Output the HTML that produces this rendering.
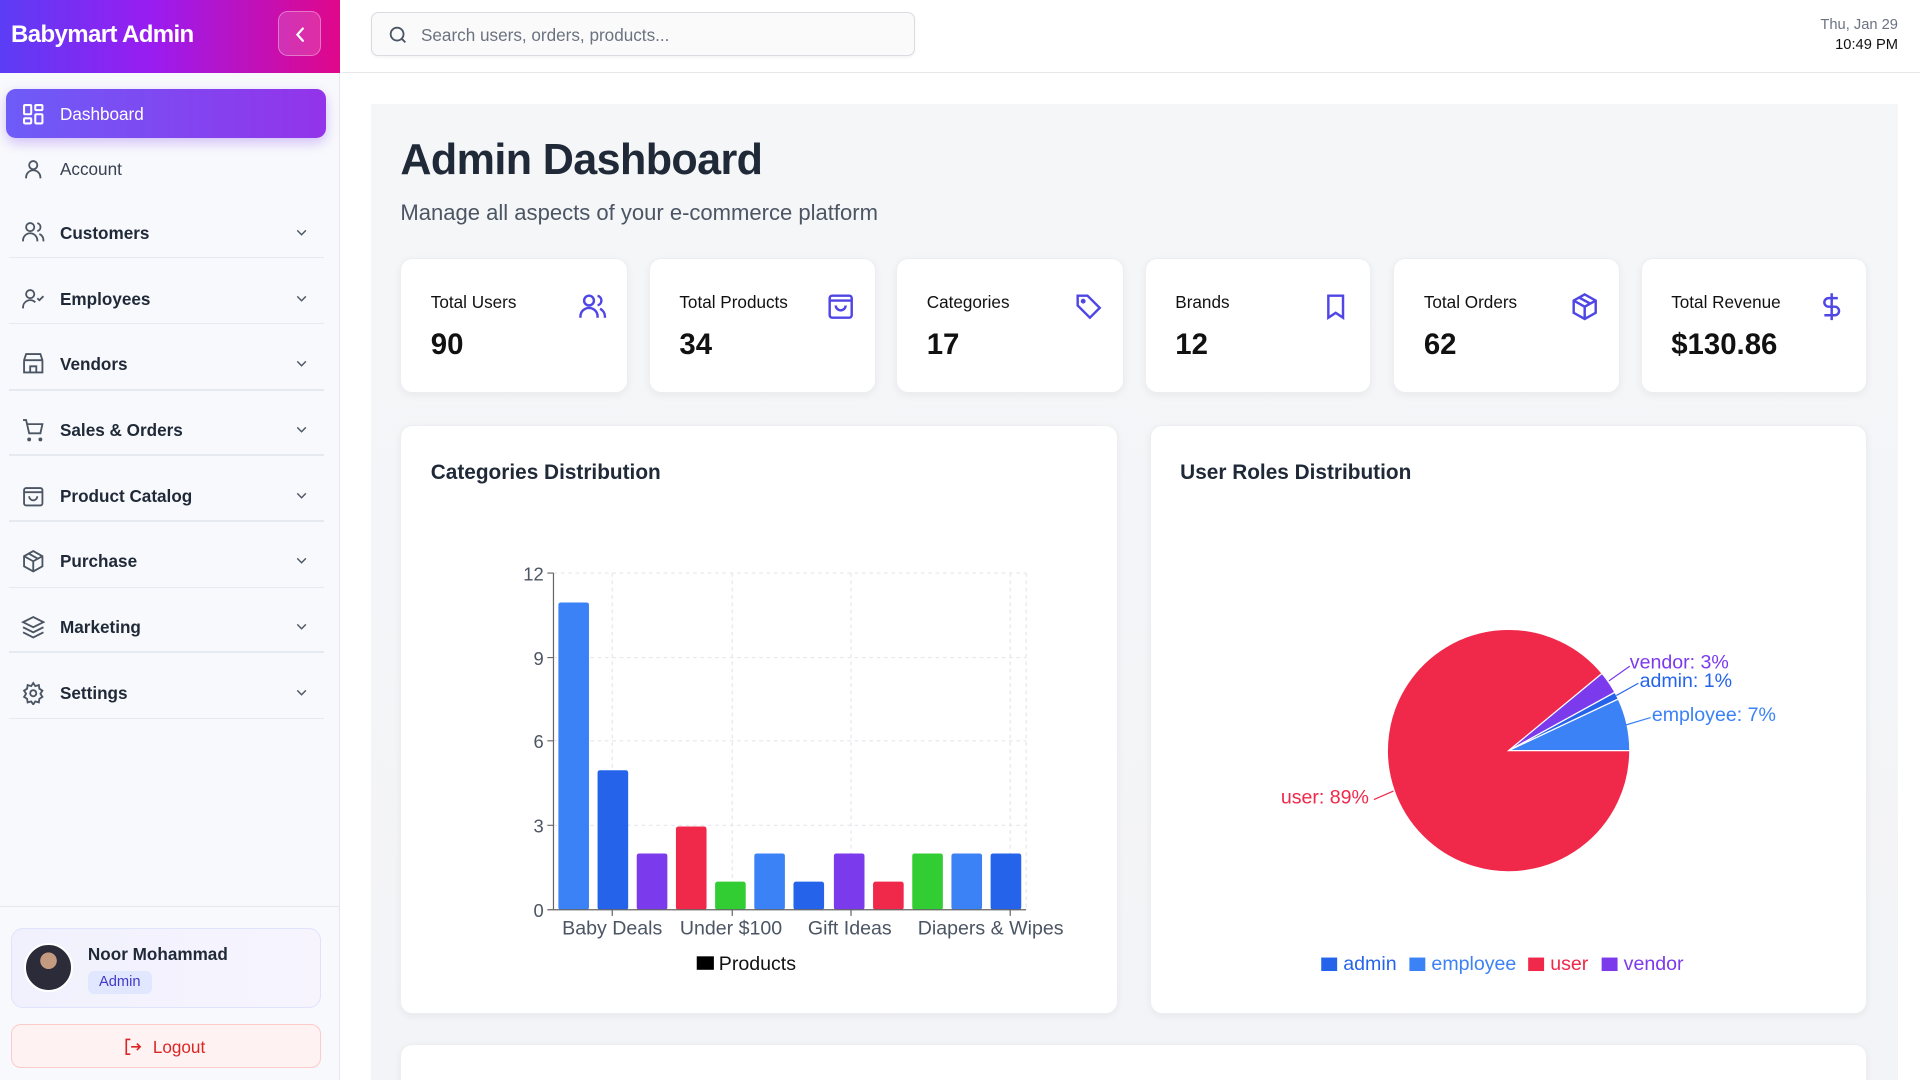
<!DOCTYPE html>
<html><head><meta charset="utf-8"><style>
*{box-sizing:border-box;margin:0;padding:0}
html,body{width:1920px;height:1080px;overflow:hidden;background:#fff}
#root{zoom:1.2245;width:1568px;height:882px;position:relative;font-family:"Liberation Sans",sans-serif;color:#1f2937}
.abs{position:absolute}
.side{left:0;top:0;width:278px;height:882px;background:#f8f9fc;border-right:1px solid #e5e7eb}
.logo{left:0;top:0;width:278px;height:60px;background:linear-gradient(90deg,#5b3df5 0%,#9a1cf0 45%,#e0078a 100%)}
.logo span{position:absolute;left:9px;top:17px;color:#fff;font-weight:bold;font-size:19.6px;letter-spacing:-0.5px}
.cbtn{left:227px;top:9px;width:35px;height:37px;border:1px solid rgba(255,255,255,.35);border-radius:8px;background:rgba(255,255,255,.15)}
.nav{left:5px;width:261px;height:40px;font-size:14px;color:#1f2937;font-weight:bold}
.nav .t{position:absolute;left:44px;top:12px}
.nav svg.i{position:absolute;left:12px;top:10px}
.nav .ch{position:absolute;left:234px;top:13px}
.sep{left:7px;width:258px;height:1px;background:#e5e9f0}
.card{background:#fff;border:1px solid #eceef2;border-radius:10px;box-shadow:0 2px 6px rgba(0,0,0,.05)}
.stat .l{position:absolute;left:24px;top:27px;font-size:14px;color:#111}
.stat .v{position:absolute;left:24px;top:56px;font-size:24px;font-weight:bold;color:#111}
.stat svg{position:absolute;right:16px;top:27px}
</style></head><body><div id="root">
<div class="abs side"></div>
<div class="abs logo"><span>Babymart Admin</span></div>
<div class="abs cbtn"><svg width="35" height="37" viewBox="0 0 35 37"><path d="M19.5 13.5l-4.5 5 4.5 5" stroke="#fff" stroke-width="1.8" fill="none" stroke-linecap="round"/></svg></div>
<div class="abs" style="left:279px;top:0;width:1289px;height:60px;background:#fff;border-bottom:1px solid #e5e7eb"></div>
<div class="abs" style="left:303px;top:10px;width:444px;height:36px;border:1px solid #d9dce1;border-radius:6px;background:#fafafa;box-shadow:0 1px 2px rgba(0,0,0,.05)">
<svg class="abs" style="left:12px;top:9px" width="18" height="18" viewBox="0 0 24 24" fill="none" stroke="#4b5563" stroke-width="2"><circle cx="11" cy="11" r="7"/><path d="M20 20l-4-4"/></svg>
<span class="abs" style="left:40px;top:10px;font-size:14px;color:#6b7280">Search users, orders, products...</span></div>
<div class="abs" style="right:18px;top:13px;text-align:right;font-size:12px;color:#6b7280;line-height:16px">Thu, Jan 29<br><span style="color:#111">10:49 PM</span></div>
<div class="abs" style="left:303px;top:85px;width:1247px;height:797px;background:linear-gradient(180deg,#f5f6f8,#f3f4f7)"></div>
<div class="abs nav" style="top:73px;background:linear-gradient(90deg,#6d5cf8,#9333ea);border-radius:8px;color:#fff;font-weight:normal;box-shadow:0 4px 10px rgba(124,58,237,.3)">
<svg class="i" width="20" height="20" viewBox="0 0 24 24" fill="none" stroke="#fff" stroke-width="2"><rect x="3" y="3" width="7" height="9" rx="1"/><rect x="14" y="3" width="7" height="5" rx="1"/><rect x="14" y="12" width="7" height="9" rx="1"/><rect x="3" y="16" width="7" height="5" rx="1"/></svg><span class="t">Dashboard</span></div>
<div class="abs nav" style="top:118px;font-weight:normal"><svg class="i" width="20" height="20" viewBox="0 0 24 24" fill="none" stroke="#4b5563" stroke-width="1.8"><circle cx="12" cy="8" r="4"/><path d="M5 21v-1a7 7 0 0114 0v1"/></svg><span class="t" style="color:#374151">Account</span></div>
<div class="abs nav" style="top:170px"><svg class="i" width="20" height="20" viewBox="0 0 24 24" fill="none" stroke="#4b5563" stroke-width="1.8"><circle cx="9" cy="7" r="4"/><path d="M2 21v-1a7 7 0 0114 0v1M16 3.1a4 4 0 010 7.8M22 21v-1a7 7 0 00-4-6.3"/></svg><span class="t">Customers</span><svg class="ch" width="14" height="14" viewBox="0 0 24 24" fill="none" stroke="#4b5563" stroke-width="2"><path d="M6 9l6 6 6-6"/></svg></div>
<div class="abs sep" style="top:210px"></div>
<div class="abs nav" style="top:224px"><svg class="i" width="20" height="20" viewBox="0 0 24 24" fill="none" stroke="#4b5563" stroke-width="1.8"><circle cx="9" cy="7" r="4"/><path d="M2 21v-1a7 7 0 0112-5M16 11l2 2 4-4"/></svg><span class="t">Employees</span><svg class="ch" width="14" height="14" viewBox="0 0 24 24" fill="none" stroke="#4b5563" stroke-width="2"><path d="M6 9l6 6 6-6"/></svg></div>
<div class="abs sep" style="top:264px"></div>
<div class="abs nav" style="top:277px"><svg class="i" width="20" height="20" viewBox="0 0 24 24" fill="none" stroke="#4b5563" stroke-width="1.8"><path d="M3 9l2-6h14l2 6M3 9v12h18V9M3 9h18M9 21v-6h6v6"/></svg><span class="t">Vendors</span><svg class="ch" width="14" height="14" viewBox="0 0 24 24" fill="none" stroke="#4b5563" stroke-width="2"><path d="M6 9l6 6 6-6"/></svg></div>
<div class="abs sep" style="top:318px"></div>
<div class="abs nav" style="top:331px"><svg class="i" width="20" height="20" viewBox="0 0 24 24" fill="none" stroke="#4b5563" stroke-width="1.8"><circle cx="8" cy="21" r="1"/><circle cx="19" cy="21" r="1"/><path d="M2 2h3l3 13h11l2-9H6"/></svg><span class="t">Sales &amp; Orders</span><svg class="ch" width="14" height="14" viewBox="0 0 24 24" fill="none" stroke="#4b5563" stroke-width="2"><path d="M6 9l6 6 6-6"/></svg></div>
<div class="abs sep" style="top:371px"></div>
<div class="abs nav" style="top:385px"><svg class="i" width="20" height="20" viewBox="0 0 24 24" fill="none" stroke="#4b5563" stroke-width="1.8"><rect x="3" y="4" width="18" height="17" rx="2"/><path d="M3 8h18M8 12a4 4 0 008 0"/></svg><span class="t">Product Catalog</span><svg class="ch" width="14" height="14" viewBox="0 0 24 24" fill="none" stroke="#4b5563" stroke-width="2"><path d="M6 9l6 6 6-6"/></svg></div>
<div class="abs sep" style="top:425px"></div>
<div class="abs nav" style="top:438px"><svg class="i" width="20" height="20" viewBox="0 0 24 24" fill="none" stroke="#4b5563" stroke-width="1.8"><path d="M12 2l9 5v10l-9 5-9-5V7zM3 7l9 5 9-5M12 12v10M7.5 4.5l9 5"/></svg><span class="t">Purchase</span><svg class="ch" width="14" height="14" viewBox="0 0 24 24" fill="none" stroke="#4b5563" stroke-width="2"><path d="M6 9l6 6 6-6"/></svg></div>
<div class="abs sep" style="top:479px"></div>
<div class="abs nav" style="top:492px"><svg class="i" width="20" height="20" viewBox="0 0 24 24" fill="none" stroke="#4b5563" stroke-width="1.8"><path d="M12 2L2 7l10 5 10-5zM2 12l10 5 10-5M2 17l10 5 10-5"/></svg><span class="t">Marketing</span><svg class="ch" width="14" height="14" viewBox="0 0 24 24" fill="none" stroke="#4b5563" stroke-width="2"><path d="M6 9l6 6 6-6"/></svg></div>
<div class="abs sep" style="top:532px"></div>
<div class="abs nav" style="top:546px"><svg class="i" width="20" height="20" viewBox="0 0 24 24" fill="none" stroke="#4b5563" stroke-width="1.8"><circle cx="12" cy="12" r="3"/><path d="M12 2l2 3 3.5-1 .5 3.5 3 2-2 3 2 3-3 2-.5 3.5-3.5-1-2 3-2-3-3.5 1-.5-3.5-3-2 2-3-2-3 3-2L6.5 4 10 5z"/></svg><span class="t">Settings</span><svg class="ch" width="14" height="14" viewBox="0 0 24 24" fill="none" stroke="#4b5563" stroke-width="2"><path d="M6 9l6 6 6-6"/></svg></div>
<div class="abs sep" style="top:586px"></div>
<div class="abs" style="left:0;top:740px;width:278px;height:1px;background:#e5e7eb"></div>
<div class="abs" style="left:9px;top:758px;width:253px;height:65px;border:1px solid #dfe3fb;border-radius:10px;background:linear-gradient(90deg,#f0f1fd,#f7f4fe)">
<div class="abs" style="left:10px;top:11px;width:40px;height:40px;border-radius:50%;background:radial-gradient(circle at 50% 35%,#c49a80 0 22%,#2b2b3a 23% 100%);border:2px solid #fff"></div>
<span class="abs" style="left:62px;top:12px;font-size:14px;font-weight:bold;color:#1f2937">Noor Mohammad</span>
<span class="abs" style="left:62px;top:34px;font-size:12px;color:#4338ca;background:#e0e7ff;border-radius:5px;padding:3px 9px">Admin</span></div>
<div class="abs" style="left:9px;top:836px;width:253px;height:36px;border:1px solid #fecaca;border-radius:8px;background:#fef2f2;color:#dc2626;font-size:14px">
<svg class="abs" style="left:91px;top:10px" width="16" height="16" viewBox="0 0 24 24" fill="none" stroke="#dc2626" stroke-width="2"><path d="M9 3H4v18h5M10 12h11M17 8l4 4-4 4"/></svg><span class="abs" style="left:115px;top:10px">Logout</span></div>
<div class="abs" style="left:327px;top:111px;font-size:35.2px;font-weight:bold;color:#1f2937;letter-spacing:-0.5px">Admin Dashboard</div>
<div class="abs" style="left:327px;top:163px;font-size:18px;color:#4b5563">Manage all aspects of your e-commerce platform</div>
<div class="abs card stat" style="left:327px;top:211px;width:186px;height:110px"><span class="l">Total Users</span><span class="v">90</span><svg width="24" height="24" viewBox="0 0 24 24" fill="none" stroke="#4f46e5" stroke-width="2"><circle cx="9" cy="7" r="4"/><path d="M2 21v-1a7 7 0 0114 0v1M16 3.1a4 4 0 010 7.8M22 21v-1a7 7 0 00-4-6.3"/></svg></div>
<div class="abs card stat" style="left:530px;top:211px;width:185px;height:110px"><span class="l">Total Products</span><span class="v">34</span><svg width="24" height="24" viewBox="0 0 24 24" fill="none" stroke="#4f46e5" stroke-width="2"><rect x="3" y="3" width="18" height="18" rx="2"/><path d="M3 7h18M8 11a4 4 0 008 0"/></svg></div>
<div class="abs card stat" style="left:732px;top:211px;width:186px;height:110px"><span class="l">Categories</span><span class="v">17</span><svg width="24" height="24" viewBox="0 0 24 24" fill="none" stroke="#4f46e5" stroke-width="2"><path d="M3 3h8l10 10-8 8L3 11z"/><circle cx="7.5" cy="7.5" r="1"/></svg></div>
<div class="abs card stat" style="left:935px;top:211px;width:185px;height:110px"><span class="l">Brands</span><span class="v">12</span><svg width="24" height="24" viewBox="0 0 24 24" fill="none" stroke="#4f46e5" stroke-width="2"><path d="M6 3h12v18l-6-4-6 4z"/></svg></div>
<div class="abs card stat" style="left:1138px;top:211px;width:185px;height:110px"><span class="l">Total Orders</span><span class="v">62</span><svg width="24" height="24" viewBox="0 0 24 24" fill="none" stroke="#4f46e5" stroke-width="2"><path d="M12 2l9 5v10l-9 5-9-5V7zM3 7l9 5 9-5M12 12v10M7.5 4.5l9 5"/></svg></div>
<div class="abs card stat" style="left:1340px;top:211px;width:185px;height:110px"><span class="l">Total Revenue</span><span class="v">$130.86</span><svg width="24" height="24" viewBox="0 0 24 24" fill="none" stroke="#4f46e5" stroke-width="2"><path d="M12 1v22M17 5H9.5a3.5 3.5 0 000 7h5a3.5 3.5 0 010 7H6"/></svg></div>
<div class="abs card" style="left:327px;top:347px;width:586px;height:481px"><span class="abs" style="left:24px;top:29px;font-size:17px;font-weight:bold;color:#1f2937">Categories Distribution</span></div>
<div class="abs card" style="left:939px;top:347px;width:586px;height:481px"><span class="abs" style="left:24px;top:29px;font-size:17px;font-weight:bold;color:#1f2937">User Roles Distribution</span></div>
<div class="abs card" style="left:327px;top:853px;width:1198px;height:60px"></div>
<svg class="abs" style="left:0;top:0" width="1568" height="882" viewBox="0 0 1568 882" font-family="Liberation Sans, sans-serif">
<g stroke="#e5e7eb" stroke-dasharray="3 3" fill="none">
<path d="M452 468H838M452 537H838M452 605H838M452 674H838M500 468V743M598 468V743M695 468V743M825 468V743M838 468V743"/></g>
<g>
<rect x="456" y="492" width="25" height="251" rx="2" fill="#3b82f6"/>
<rect x="488" y="629" width="25" height="114" rx="2" fill="#2563eb"/>
<rect x="520" y="697" width="25" height="46" rx="2" fill="#7c3aed"/>
<rect x="552" y="675" width="25" height="68" rx="2" fill="#f0284a"/>
<rect x="584" y="720" width="25" height="23" rx="2" fill="#32cd32"/>
<rect x="616" y="697" width="25" height="46" rx="2" fill="#3b82f6"/>
<rect x="648" y="720" width="25" height="23" rx="2" fill="#2563eb"/>
<rect x="681" y="697" width="25" height="46" rx="2" fill="#7c3aed"/>
<rect x="713" y="720" width="25" height="23" rx="2" fill="#f0284a"/>
<rect x="745" y="697" width="25" height="46" rx="2" fill="#32cd32"/>
<rect x="777" y="697" width="25" height="46" rx="2" fill="#3b82f6"/>
<rect x="809" y="697" width="25" height="46" rx="2" fill="#2563eb"/>
</g>
<path d="M452 468V743H838M447 468H452M447 537H452M447 605H452M447 674H452M447 743H452M500 743V748M598 743V748M695 743V748M825 743V748" stroke="#666" fill="none"/>
<g font-size="15" fill="#4b5563" text-anchor="end"><text x="444" y="474">12</text><text x="444" y="543">9</text><text x="444" y="611">6</text><text x="444" y="680">3</text><text x="444" y="749">0</text></g>
<g font-size="16" fill="#4b5563" text-anchor="middle"><text x="500" y="763">Baby Deals</text><text x="597" y="763">Under $100</text><text x="694" y="763">Gift Ideas</text><text x="809" y="763">Diapers &amp; Wipes</text></g>
<rect x="569" y="781" width="14" height="11" fill="#000"/><text x="587" y="792" font-size="16" fill="#111">Products</text>
<path d="M1232 613L1331 613A99 99 0 0 0 1321.6 570.8Z" fill="#3b82f6" stroke="#fff"/>
<path d="M1232 613L1321.6 570.8A99 99 0 0 0 1318.8 565.3Z" fill="#2563eb" stroke="#fff"/>
<path d="M1232 613L1318.8 565.3A99 99 0 0 0 1308.3 549.9Z" fill="#7c3aed" stroke="#fff"/>
<path d="M1232 613L1308.3 549.9A99 99 0 1 0 1331 613Z" fill="#f0284a" stroke="#fff"/>
<g fill="none" stroke-width="1"><path d="M1314 556L1331 544" stroke="#7c3aed"/><path d="M1320 568L1338 558" stroke="#2563eb"/><path d="M1328 592L1348 586" stroke="#3b82f6"/><path d="M1138 646L1122 653" stroke="#f0284a"/></g>
<g font-size="16"><text x="1331" y="546" fill="#7c3aed">vendor: 3%</text><text x="1339" y="561" fill="#2563eb">admin: 1%</text><text x="1349" y="589" fill="#3b82f6">employee: 7%</text><text x="1046" y="656" fill="#f0284a">user: 89%</text></g>
<g font-size="16"><rect x="1079" y="782" width="13" height="11" fill="#2563eb"/><text x="1097" y="792" fill="#2563eb">admin</text>
<rect x="1151" y="782" width="13" height="11" fill="#3b82f6"/><text x="1169" y="792" fill="#3b82f6">employee</text>
<rect x="1248" y="782" width="13" height="11" fill="#f0284a"/><text x="1266" y="792" fill="#f0284a">user</text>
<rect x="1308" y="782" width="13" height="11" fill="#7c3aed"/><text x="1326" y="792" fill="#7c3aed">vendor</text></g>
</svg>
</div></body></html>
